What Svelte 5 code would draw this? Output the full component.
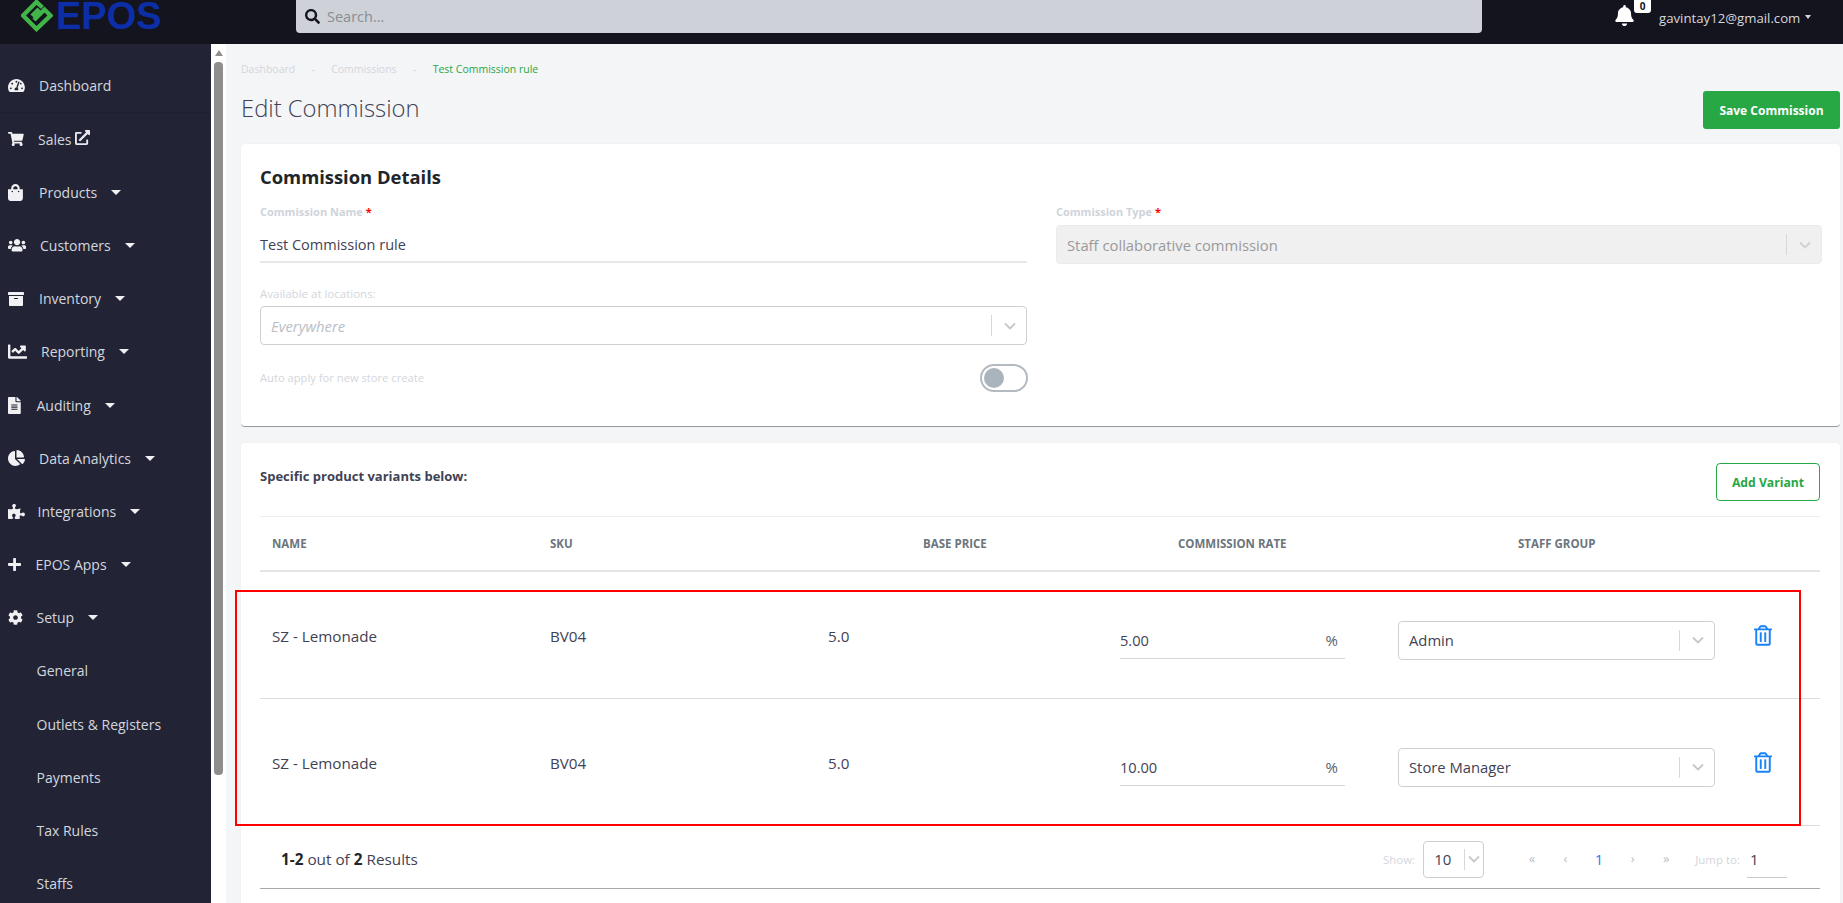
<script>
  const P = {
    tach: [576, 'M288 32C128.94 32 0 160.94 0 320c0 52.8 14.25 102.26 39.06 144.8 5.61 9.62 16.3 15.2 27.44 15.2h443c11.14 0 21.83-5.58 27.44-15.2C561.75 422.26 576 372.8 576 320c0-159.06-128.94-288-288-288zm0 64c14.71 0 26.58 10.13 30.32 23.65-1.11 2.26-2.64 4.23-3.45 6.67l-9.22 27.67c-5.13 3.49-10.97 6.01-17.64 6.01-17.67 0-32-14.33-32-32S270.33 96 288 96zM96 384c-17.67 0-32-14.33-32-32s14.33-32 32-32 32 14.33 32 32-14.33 32-32 32zm48-160c-17.67 0-32-14.33-32-32s14.33-32 32-32 32 14.33 32 32-14.33 32-32 32zm246.77-72.41l-61.33 184C343.13 347.33 352 364.54 352 384c0 11.72-3.38 22.55-8.88 32H232.88c-5.5-9.45-8.88-20.28-8.88-32 0-33.94 26.5-61.43 59.9-63.59l61.34-184.01c4.17-12.56 17.73-19.45 30.36-15.17 12.57 4.19 19.35 17.77 15.17 30.36zm14.66 57.2l15.52-46.55c3.47-1.29 7.13-2.23 11.05-2.23 17.67 0 32 14.33 32 32s-14.33 32-32 32c-11.38-.01-20.89-6.28-26.57-15.22zM480 384c-17.67 0-32-14.33-32-32s14.33-32 32-32 32 14.33 32 32-14.33 32-32 32z'],
    cart: [576, 'M528.12 301.319l47.273-208C578.806 78.301 567.391 64 551.99 64H159.208l-9.166-44.81C147.758 8.021 137.93 0 126.529 0H24C10.745 0 0 10.745 0 24v16c0 13.255 10.745 24 24 24h69.883l70.248 343.435C147.325 417.1 136 435.222 136 456c0 30.928 25.072 56 56 56s56-25.072 56-56c0-15.674-6.447-29.835-16.824-40h209.647C430.447 426.165 424 440.326 424 456c0 30.928 25.072 56 56 56s56-25.072 56-56c0-22.172-12.888-41.332-31.579-50.405l5.517-24.276c3.413-15.018-8.002-29.319-23.403-29.319H218.117l-6.545-32h293.145c11.206 0 20.92-7.754 23.403-18.681z'],
    bag: [448, 'M352 160v-32C352 57.42 294.579 0 224 0 153.42 0 96 57.42 96 128v32H0v272c0 44.183 35.817 80 80 80h288c44.183 0 80-35.817 80-80V160h-96zm-192-32c0-35.29 28.71-64 64-64s64 28.71 64 64v32H160v-32zm160 120c-13.255 0-24-10.745-24-24 0-13.255 10.745-24 24-24s24 10.745 24 24c0 13.255-10.745 24-24 24zm-192 0c-13.255 0-24-10.745-24-24 0-13.255 10.745-24 24-24s24 10.745 24 24c0 13.255-10.745 24-24 24z'],
    users: [640, 'M96 224c35.3 0 64-28.7 64-64s-28.7-64-64-64-64 28.7-64 64 28.7 64 64 64zm448 0c35.3 0 64-28.7 64-64s-28.7-64-64-64-64 28.7-64 64 28.7 64 64 64zm32 32h-64c-17.6 0-33.5 7.1-45.1 18.6 40.3 22.1 68.9 62 75.1 109.4h66c17.7 0 32-14.3 32-32v-32c0-35.3-28.7-64-64-64zm-256 0c61.9 0 112-50.1 112-112S381.9 32 320 32 208 82.1 208 144s50.1 112 112 112zm76.8 32h-8.3c-20.8 10-43.9 16-68.5 16s-47.6-6-68.5-16h-8.3C179.6 288 128 339.6 128 403.2V432c0 26.5 21.5 48 48 48h288c26.5 0 48-21.5 48-48v-28.8c0-63.6-51.6-115.2-115.2-115.2zm-223.7-13.4C161.5 263.1 145.6 256 128 256H64c-35.3 0-64 28.7-64 64v32c0 17.7 14.3 32 32 32h65.9c6.3-47.4 34.9-87.3 75.2-109.4z'],
    archive: [512, 'M32 448c0 17.7 14.3 32 32 32h384c17.7 0 32-14.3 32-32V160H32v288zm160-212c0-6.6 5.4-12 12-12h104c6.6 0 12 5.4 12 12v8c0 6.6-5.4 12-12 12H204c-6.6 0-12-5.4-12-12v-8zM480 32H32C14.3 32 0 46.3 0 64v48c0 8.8 7.2 16 16 16h480c8.8 0 16-7.2 16-16V64c0-17.7-14.3-32-32-32z'],
    chart: [512, 'M496 384H64V80c0-8.84-7.16-16-16-16H16C7.16 64 0 71.16 0 80v336c0 17.67 14.33 32 32 32h464c8.84 0 16-7.16 16-16v-32c0-8.84-7.16-16-16-16zM464 96H345.94c-21.38 0-32.09 25.85-16.97 40.97l32.4 32.4L288 242.75l-73.37-73.37c-12.5-12.5-32.76-12.5-45.25 0l-68.69 68.69c-6.25 6.25-6.25 16.38 0 22.63l22.62 22.62c6.25 6.25 16.38 6.25 22.63 0L192 237.25l73.37 73.37c12.5 12.5 32.76 12.5 45.25 0l96-96 32.4 32.4c15.12 15.12 40.97 4.41 40.97-16.97V112c.01-8.84-7.15-16-15.99-16z'],
    file: [384, 'M224 136V0H24C10.7 0 0 10.7 0 24v464c0 13.3 10.7 24 24 24h336c13.3 0 24-10.7 24-24V160H248c-13.2 0-24-10.8-24-24zm64 236c0 6.6-5.4 12-12 12H108c-6.6 0-12-5.4-12-12v-8c0-6.6 5.4-12 12-12h168c6.6 0 12 5.4 12 12v8zm0-64c0 6.6-5.4 12-12 12H108c-6.6 0-12-5.4-12-12v-8c0-6.6 5.4-12 12-12h168c6.6 0 12 5.4 12 12v8zm0-72v8c0 6.6-5.4 12-12 12H108c-6.6 0-12-5.4-12-12v-8c0-6.6 5.4-12 12-12h168c6.6 0 12 5.4 12 12zm96-114.1v6.1H256V0h6.1c6.4 0 12.5 2.5 17 7l97.9 98c4.5 4.5 7 10.6 7 16.9z'],
    pie: [544, 'M527.79 288H290.5l158.03 158.03c6.04 6.04 15.98 6.53 22.19.68 38.7-36.46 65.32-85.61 73.13-140.86 1.34-9.46-6.51-17.85-16.06-17.85zm-15.83-64.8C503.72 103.74 408.26 8.28 288.8.04 279.68-.59 272 7.1 272 16.24V240h223.77c9.14 0 16.82-7.68 16.19-16.8zM224 288V50.71c0-9.55-8.39-17.4-17.84-16.06C86.99 51.49-4.1 155.6.14 280.37 4.5 408.51 114.83 513.59 243.03 511.98c50.4-.63 96.97-16.87 135.26-44.03 7.9-5.6 8.42-17.23 1.57-24.08L224 288z'],
    puzzle: [576, 'M519.442 288.651c-41.519 0-59.5 31.593-82.058 31.593C377.409 320.244 432 144 432 144s-196.288 80-196.288-3.297c0-35.827 36.288-46.25 36.288-85.985C272 19.216 243.885 0 210.539 0c-34.654 0-66.366 18.891-66.366 56.346 0 41.364 31.711 59.277 31.711 81.75C175.885 207.719 0 166.758 0 166.758v333.237s178.635 41.047 178.635-28.662c0-22.473-40-40.107-40-81.471 0-37.456 29.25-56.346 63.577-56.346 33.673 0 61.788 19.216 61.788 54.717 0 39.735-36.288 50.158-36.288 85.985 0 60.803 129.675 25.73 181.23 25.73 0 0-34.725-120.101 25.827-120.101 35.962 0 46.423 36.152 86.308 36.152C556.712 416 576 387.99 576 354.443c0-34.199-18.962-65.792-56.558-65.792z'],
    plus: [448, 'M416 208H272V64c0-17.67-14.33-32-32-32h-32c-17.67 0-32 14.33-32 32v144H32c-17.67 0-32 14.33-32 32v32c0 17.67 14.33 32 32 32h144v144c0 17.67 14.33 32 32 32h32c17.67 0 32-14.33 32-32V304h144c17.67 0 32-14.33 32-32v-32c0-17.67-14.33-32-32-32z'],
    cog: [512, 'M487.4 315.7l-42.6-24.6c4.3-23.2 4.3-47 0-70.2l42.6-24.6c4.9-2.8 7.1-8.6 5.5-14-11.1-35.6-30-67.8-54.7-94.6-3.8-4.1-10-5.1-14.8-2.3L380.8 110c-17.9-15.4-38.5-27.3-60.8-35.1V25.8c0-5.6-3.9-10.5-9.4-11.7-36.7-8.2-74.3-7.8-109.2 0-5.5 1.2-9.4 6.1-9.4 11.7V75c-22.2 7.9-42.8 19.8-60.8 35.1L88.7 85.5c-4.9-2.8-11-1.9-14.8 2.3-24.7 26.7-43.6 58.9-54.7 94.6-1.7 5.4.6 11.2 5.5 14L67.3 221c-4.3 23.2-4.3 47 0 70.2l-42.6 24.6c-4.9 2.8-7.1 8.6-5.5 14 11.1 35.6 30 67.8 54.7 94.6 3.8 4.1 10 5.1 14.8 2.3l42.6-24.6c17.9 15.4 38.5 27.3 60.8 35.1v49.2c0 5.6 3.9 10.5 9.4 11.7 36.7 8.2 74.3 7.8 109.2 0 5.5-1.2 9.4-6.1 9.4-11.7v-49.2c22.2-7.9 42.8-19.8 60.8-35.1l42.6 24.6c4.9 2.8 11 1.9 14.8-2.3 24.7-26.7 43.6-58.9 54.7-94.6 1.5-5.5-.7-11.3-5.6-14.1zM256 336c-44.1 0-80-35.9-80-80s35.9-80 80-80 80 35.9 80 80-35.9 80-80 80z']
  };
  const search = 'M505 442.7L405.3 343c-4.5-4.5-10.6-7-17-7H372c27.6-35.3 44-79.7 44-128C416 93.1 322.9 0 208 0S0 93.1 0 208s93.1 208 208 208c48.3 0 92.7-16.4 128-44v16.3c0 6.4 2.5 12.5 7 17l99.7 99.7c9.4 9.4 24.6 9.4 33.9 0l28.3-28.3c9.4-9.4 9.4-24.6.1-34zM208 336c-70.7 0-128-57.2-128-128 0-70.7 57.2-128 128-128 70.7 0 128 57.2 128 128 0 70.7-57.2 128-128 128z';
  const bell = 'M224 512c35.32 0 63.97-28.65 63.97-64H160.03c0 35.35 28.65 64 63.97 64zm215.39-149.71c-19.32-20.76-55.47-51.99-55.47-154.29 0-77.7-54.48-139.9-127.94-155.16V32c0-17.67-14.32-32-31.98-32s-31.98 14.33-31.98 32v20.84C118.56 68.1 64.08 130.3 64.08 208c0 102.3-36.15 133.53-55.47 154.29-6 6.45-8.66 14.16-8.61 21.71.11 16.4 12.98 32 32.1 32h383.8c19.12 0 32-15.6 32.1-32 .05-7.55-2.61-15.27-8.61-21.71z';
  const ext = 'M432,320H400a16,16,0,0,0-16,16V448H64V128H208a16,16,0,0,0,16-16V80a16,16,0,0,0-16-16H48A48,48,0,0,0,0,112V464a48,48,0,0,0,48,48H400a48,48,0,0,0,48-48V336A16,16,0,0,0,432,320ZM488,0h-128c-21.37,0-32.05,25.91-17,41l35.73,35.73L135,320.37a24,24,0,0,0,0,34L157.67,377a24,24,0,0,0,34,0L435.28,133.32,471,169c15,15,41,4.5,41-17V24A24,24,0,0,0,488,0Z';
  const trash = 'M268 416h24a12 12 0 0 0 12-12V188a12 12 0 0 0-12-12h-24a12 12 0 0 0-12 12v216a12 12 0 0 0 12 12zM432 80h-82.41l-34-56.7A48 48 0 0 0 274.41 0H173.59a48 48 0 0 0-41.16 23.3L98.41 80H16A16 16 0 0 0 0 96v16a16 16 0 0 0 16 16h16v336a48 48 0 0 0 48 48h288a48 48 0 0 0 48-48V128h16a16 16 0 0 0 16-16V96a16 16 0 0 0-16-16zM171.84 50.91A6 6 0 0 1 177 48h94a6 6 0 0 1 5.15 2.91L293.61 80H154.39zM368 464H80V128h288zm-212-48h24a12 12 0 0 0 12-12V188a12 12 0 0 0-12-12h-24a12 12 0 0 0-12 12v216a12 12 0 0 0 12 12z';

  const nav = [
    { label: 'Dashboard', icon: 'tach', h: 15, w: 31, line: true },
    { label: 'Sales', icon: 'cart', h: 14, w: 30, ext: true },
    { label: 'Products', icon: 'bag', h: 17, w: 31, caret: true },
    { label: 'Customers', icon: 'users', h: 14.5, w: 32, caret: true },
    { label: 'Inventory', icon: 'archive', h: 16, w: 31, caret: true },
    { label: 'Reporting', icon: 'chart', h: 19, w: 33, caret: true },
    { label: 'Auditing', icon: 'file', h: 17, w: 28.5, caret: true },
    { label: 'Data Analytics', icon: 'pie', h: 16, w: 31, caret: true },
    { label: 'Integrations', icon: 'puzzle', h: 15, w: 29.5, caret: true },
    { label: 'EPOS Apps', icon: 'plus', h: 15, w: 27.5, caret: true },
    { label: 'Setup', icon: 'cog', h: 15, w: 28.5, caret: true },
    { label: 'General', w: 28.5 },
    { label: 'Outlets & Registers', w: 28.5 },
    { label: 'Payments', w: 28.5 },
    { label: 'Tax Rules', w: 28.5 },
    { label: 'Staffs', w: 28.5 }
  ];
  const rows = [
    { name: 'SZ - Lemonade', sku: 'BV04', price: '5.0', rate: '5.00', group: 'Admin' },
    { name: 'SZ - Lemonade', sku: 'BV04', price: '5.0', rate: '10.00', group: 'Store Manager' }
  ];
</script>

<div class="app">
  <header class="top">
    <div class="logo">
      <svg class="mark" viewBox="0 0 32 32" width="32" height="32" aria-hidden="true">
        <path d="M21.5 7.5 15.5 2 2 15.5 15.5 29 29.5 15.5 23.5 9.5 13 20 M11 16 16.5 10.5 20 14" fill="none" stroke="#42b549" stroke-width="4.4"/>
      </svg>
      <span class="wordmark">EPOS</span>
    </div>
    <div class="search">
      <svg viewBox="0 0 512 512" width="15" height="15" aria-hidden="true"><path d={search} fill="#14141f"/></svg>
      <span>Search...</span>
    </div>
    <div class="user">
      <div class="bell">
        <svg viewBox="0 0 448 512" width="19" height="21" aria-hidden="true"><path d={bell} fill="#fff"/></svg>
        <span class="badge">0</span>
      </div>
      <span class="email">gavintay12@gmail.com</span>
      <i class="ucaret"></i>
    </div>
  </header>

  <div class="body">
    <nav class="side">
      {#each nav as n}
        <div class="item" class:line={n.line}>
          <span class="ic" style="width:{n.w}px">
            {#if n.icon}
              <svg viewBox="0 0 {P[n.icon][0]} 512" height={n.h} aria-hidden="true"><path d={P[n.icon][1]} fill="#f1f1f4"/></svg>
            {/if}
          </span>
          <span>{n.label}</span>
          {#if n.ext}
            <svg class="ext" viewBox="0 0 512 512" width="15" height="15" aria-hidden="true"><path d={ext} fill="#e8e8ee"/></svg>
          {/if}
          {#if n.caret}<i class="caret"></i>{/if}
        </div>
      {/each}
    </nav>

    <div class="track">
      <i class="arrow"></i>
      <i class="thumb"></i>
    </div>

    <main class="main">
      <div class="crumbs">
        <span>Dashboard</span><b>-</b><span>Commissions</span><b>-</b><span class="cur">Test Commission rule</span>
      </div>
      <div class="head">
        <h1>Edit Commission</h1>
        <button class="save">Save Commission</button>
      </div>

      <section class="card details">
        <h2>Commission Details</h2>
        <div class="form">
          <div class="col">
            <div class="lab strong">Commission Name <em>*</em></div>
            <div class="line-input">Test Commission rule</div>
            <div class="lab avail">Available at locations:</div>
            <div class="select"><span class="ph">Everywhere</span><span class="sep"></span><svg class="chev" viewBox="0 0 12 8" width="12" height="8"><path d="M1 1.5 6 6.5 11 1.5" fill="none" stroke="#c4c8cc" stroke-width="1.8"/></svg></div>
            <div class="toggle-row">
              <span class="lab plain">Auto apply for new store create</span>
              <span class="toggle"><i></i></span>
            </div>
          </div>
          <div class="col">
            <div class="lab strong">Commission Type <em>*</em></div>
            <div class="select disabled"><span>Staff collaborative commission</span><span class="sep"></span><svg class="chev" viewBox="0 0 12 8" width="12" height="8"><path d="M1 1.5 6 6.5 11 1.5" fill="none" stroke="#d0d0d0" stroke-width="1.8"/></svg></div>
          </div>
        </div>
      </section>

      <section class="card variants">
        <div class="vhead">
          <strong>Specific product variants below:</strong>
          <button class="add">Add Variant</button>
        </div>
        <div class="thead">
          <span>NAME</span><span>SKU</span><span>BASE PRICE</span><span>COMMISSION RATE</span><span>STAFF GROUP</span>
        </div>
        <div class="rows">
          {#each rows as r}
            <div class="row">
              <span class="t">{r.name}</span>
              <span class="t">{r.sku}</span>
              <span class="t">{r.price}</span>
              <div class="rate"><span>{r.rate}</span><span class="pct">%</span></div>
              <div class="select small"><span>{r.group}</span><span class="sep"></span><svg class="chev" viewBox="0 0 12 8" width="12" height="8"><path d="M1 1.5 6 6.5 11 1.5" fill="none" stroke="#c4c8cc" stroke-width="1.8"/></svg></div>
              <svg class="trash" viewBox="0 0 448 512" width="18" height="21" aria-hidden="true"><path d={trash} fill="#1a82f7"/></svg>
            </div>
          {/each}
          <div class="marker"></div>
        </div>
        <div class="pager">
          <div class="count"><b>1-2</b> out of <b>2</b> Results</div>
          <div class="pg">
            <span class="show">Show:</span>
            <div class="psel"><span>10</span><span class="psep"></span><svg viewBox="0 0 12 8" width="12" height="8"><path d="M1 1.5 6 6.5 11 1.5" fill="none" stroke="#c4c8cc" stroke-width="1.8"/></svg></div>
            <div class="links"><span>«</span><span>‹</span><span class="on">1</span><span>›</span><span>»</span></div>
            <span class="jump">Jump to:</span>
            <span class="jv">1</span>
          </div>
        </div>
      </section>
    </main>
  </div>
</div>

<style>
  :global(body) { margin: 0; background: #fff; }
  .app { width: 1843px; height: 903px; overflow: hidden; font-family: "Open Sans", "Noto Sans", sans-serif; color: #3f4254; display: flex; flex-direction: column; }
  i { display: block; font-style: normal; }

  .top { flex: 0 0 44px; background: #14141f; display: flex; align-items: flex-start; position: relative; }
  .logo { width: 296px; display: flex; align-items: flex-start; padding-left: 21px; box-sizing: border-box; }
  .mark { flex: none; }
  .wordmark { font-family: "Liberation Sans", sans-serif; font-weight: 700; font-size: 38px; line-height: 32px; color: #0c2fa8; margin-left: 3px; }
  .search { width: 1186px; height: 33px; background: #ced1d8; border-radius: 0 0 4px 4px; display: flex; align-items: center; gap: 7px; padding-left: 9px; box-sizing: border-box; font-size: 14.5px; color: #8a8d93; }
  .user { flex: 1; display: flex; align-items: flex-start; padding-left: 133px; }
  .bell { position: relative; width: 44px; padding-top: 5px; flex: none; }
  .bell svg { display: block; }
  .badge { position: absolute; left: 19px; top: 0; width: 17px; height: 13px; background: #fff; border-radius: 0 0 3px 3px; color: #14141f; font-size: 10px; font-weight: 700; text-align: center; line-height: 12px; }
  .email { font-size: 13.2px; color: #d6d7dc; line-height: 18px; padding-top: 9px; }
  .ucaret { border-top: 4px solid #d6d7dc; border-left: 3.5px solid transparent; border-right: 3.5px solid transparent; margin: 15px 0 0 5px; }

  .body { flex: 1; display: flex; min-height: 0; }
  .side { width: 211px; flex: none; background: #222436; padding-top: 16px; box-sizing: border-box; overflow: hidden; color: #d4d6de; font-size: 14px; }
  .item { height: 53.2px; display: flex; align-items: center; padding-left: 8px; box-sizing: border-box; }
  .item.line { border-bottom: 1px solid #1e2031; height: 52.5px; }
  .ic { flex: none; display: flex; align-items: center; }
  .ext { margin-left: 3px; margin-top: -3px; }
  .caret { border-top: 5.5px solid #f0f0f4; border-left: 5px solid transparent; border-right: 5px solid transparent; margin-left: 14px; }

  .track { width: 15px; flex: none; background: #fff; padding: 6px 3px 0; box-sizing: border-box; }
  .arrow { border-bottom: 6px solid #8e8e8e; border-left: 4px solid transparent; border-right: 4px solid transparent; width: 0; margin: 0 auto; }
  .thumb { width: 9px; height: 713px; margin-top: 6px; background: #8e8e8e; border-radius: 4px; }

  .main { flex: 1; min-width: 0; background: #f4f5f7; padding: 0 3px 0 15px; box-sizing: border-box; }
  .crumbs { display: flex; font-size: 10.5px; line-height: 16px; color: #d3d6dc; padding-top: 17px; }
  .crumbs b { font-weight: 400; width: 36px; text-align: center; }
  .crumbs .cur { color: #28a745; }
  .head { display: flex; justify-content: space-between; height: 67px; }
  h1 { margin: 0; font-size: 23.8px; font-weight: 300; line-height: 34px; color: #3f4254; padding-top: 14px; }
  .save { width: 137px; height: 38px; margin-top: 14px; background: #28a745; color: #fff; border: 0; border-radius: 3px; font: 700 12px "Open Sans", sans-serif; }

  .card { background: #fff; border-radius: 4px; box-shadow: 0 0 2px rgba(0, 0, 0, 0.06); box-sizing: border-box; }
  .details { height: 283px; padding: 20px 20px 0 19px; border-bottom: 1px solid #9a9a9a; margin-bottom: 16px; }
  h2 { margin: 0; font-size: 18.4px; font-weight: 700; line-height: 26px; color: #212529; }
  .form { display: grid; grid-template-columns: 767px 766px; column-gap: 29px; margin-top: 14px; }
  .lab { font-size: 11.5px; line-height: 16px; color: #d3d6dc; }
  .strong { font-weight: 700; font-size: 11px; color: #cfd3da; }
  em { color: #f00; font-style: normal; }
  .line-input { height: 33px; padding-top: 2px; margin-top: 6px; border-bottom: 2px solid #e6e8ec; font-size: 14.5px; line-height: 34px; }
  .avail { margin-top: 23px; }
  .select { height: 39px; margin-top: 4px; border: 1px solid #ccd0d5; border-radius: 4px; box-sizing: border-box; display: flex; align-items: center; padding-left: 10px; font-size: 14.8px; color: #3f4254; }
  .select > span:first-child { flex: 1; }
  .sep { width: 1px; height: 21px; background: #d6d8dc; flex: none; }
  .chev { margin: 0 10px 0 12px; flex: none; }
  .ph { font-style: italic; color: #b9bec6; }
  .disabled { margin-top: 5px; background: #f0f0f0; border-color: #ebebeb; color: #9a9a9a; }
  .toggle-row { display: flex; justify-content: space-between; align-items: center; margin-top: 19px; height: 28px; }
  .plain { font-size: 11.2px; }
  .toggle { width: 48px; height: 28px; border: 2px solid #b4bac1; border-radius: 14px; box-sizing: border-box; margin-right: -1px; padding: 2px; }
  .toggle i { width: 20px; height: 20px; background: #aab4bd; border-radius: 50%; }

  .variants { height: 470px; padding: 0 20px 0 19px; }
  .vhead { height: 73px; display: flex; justify-content: space-between; align-items: flex-start; border-bottom: 1px solid #eceef1; font-size: 13px; color: #3f4254; }
  .vhead strong { padding-top: 24px; line-height: 18px; }
  .add { width: 104px; height: 38px; margin-top: 20px; background: #fff; border: 1px solid #28a745; border-radius: 4px; color: #28a745; font: 700 12.2px "Open Sans", sans-serif; }
  .thead { display: grid; grid-template-columns: 278px 373px 255px 340px 1fr; padding-left: 12px; align-items: center; border-bottom: 2px solid #e3e4e7; box-sizing: border-box; height: 55px; font-size: 11.5px; font-weight: 700; color: #6c757d; }
  .rows { position: relative; }
  .row { display: grid; grid-template-columns: 278px 278px 292px 278px 317px 1fr; height: 127px; padding: 10px 0 0 12px; align-items: center; border-bottom: 1px solid #dcdcdc; box-sizing: border-box; }
  .t { font-size: 15.2px; padding-bottom: 9px; }
  .rate { width: 225px; height: 37px; border-bottom: 1px solid #d3d6da; box-sizing: border-box; display: flex; justify-content: space-between; align-items: center; font-size: 14.6px; padding-right: 7px; }
  .pct { color: #5a5f6a; font-size: 15px; }
  .small { margin-top: 0; }
  .trash { margin: 0 0 10px 39px; }
  .marker { position: absolute; left: -25px; right: 19px; top: 18px; bottom: 0; border: 2px solid #f00; pointer-events: none; }

  .pager { display: flex; justify-content: space-between; align-items: center; height: 63px; padding: 4px 33px 0 21px; border-bottom: 1px solid #a9a9a9; box-sizing: border-box; }
  .count { font-size: 15.3px; color: #3f4254; }
  .count b { color: #212529; }
  .pg { display: flex; align-items: center; font-size: 11.5px; color: #d3d6dc; }
  .psel { width: 61px; height: 37px; border: 1px solid #ccd0d5; border-radius: 4px; box-sizing: border-box; margin-left: 8px; display: flex; align-items: center; padding-left: 10px; color: #3f4254; font-size: 15px; }
  .psel span:first-child { flex: 1; }
  .psep { width: 1px; height: 21px; background: #d6d8dc; }
  .psel svg { margin: 0 3px 0 3px; }
  .links { display: flex; margin-left: 31px; width: 168px; font-size: 13px; color: #b9bec6; }
  .links span { width: 34px; text-align: center; }
  .links .on { color: #1a82f7; font-size: 15px; }
  .jump { margin-left: 12px; white-space: nowrap; }
  .jv { width: 40px; margin: 0 0 0 7px; padding: 0 0 0 3px; height: 37px; line-height: 37px; border-bottom: 1px solid #c8ccd0; box-sizing: border-box; font-size: 15px; color: #3f4254; }
</style>
